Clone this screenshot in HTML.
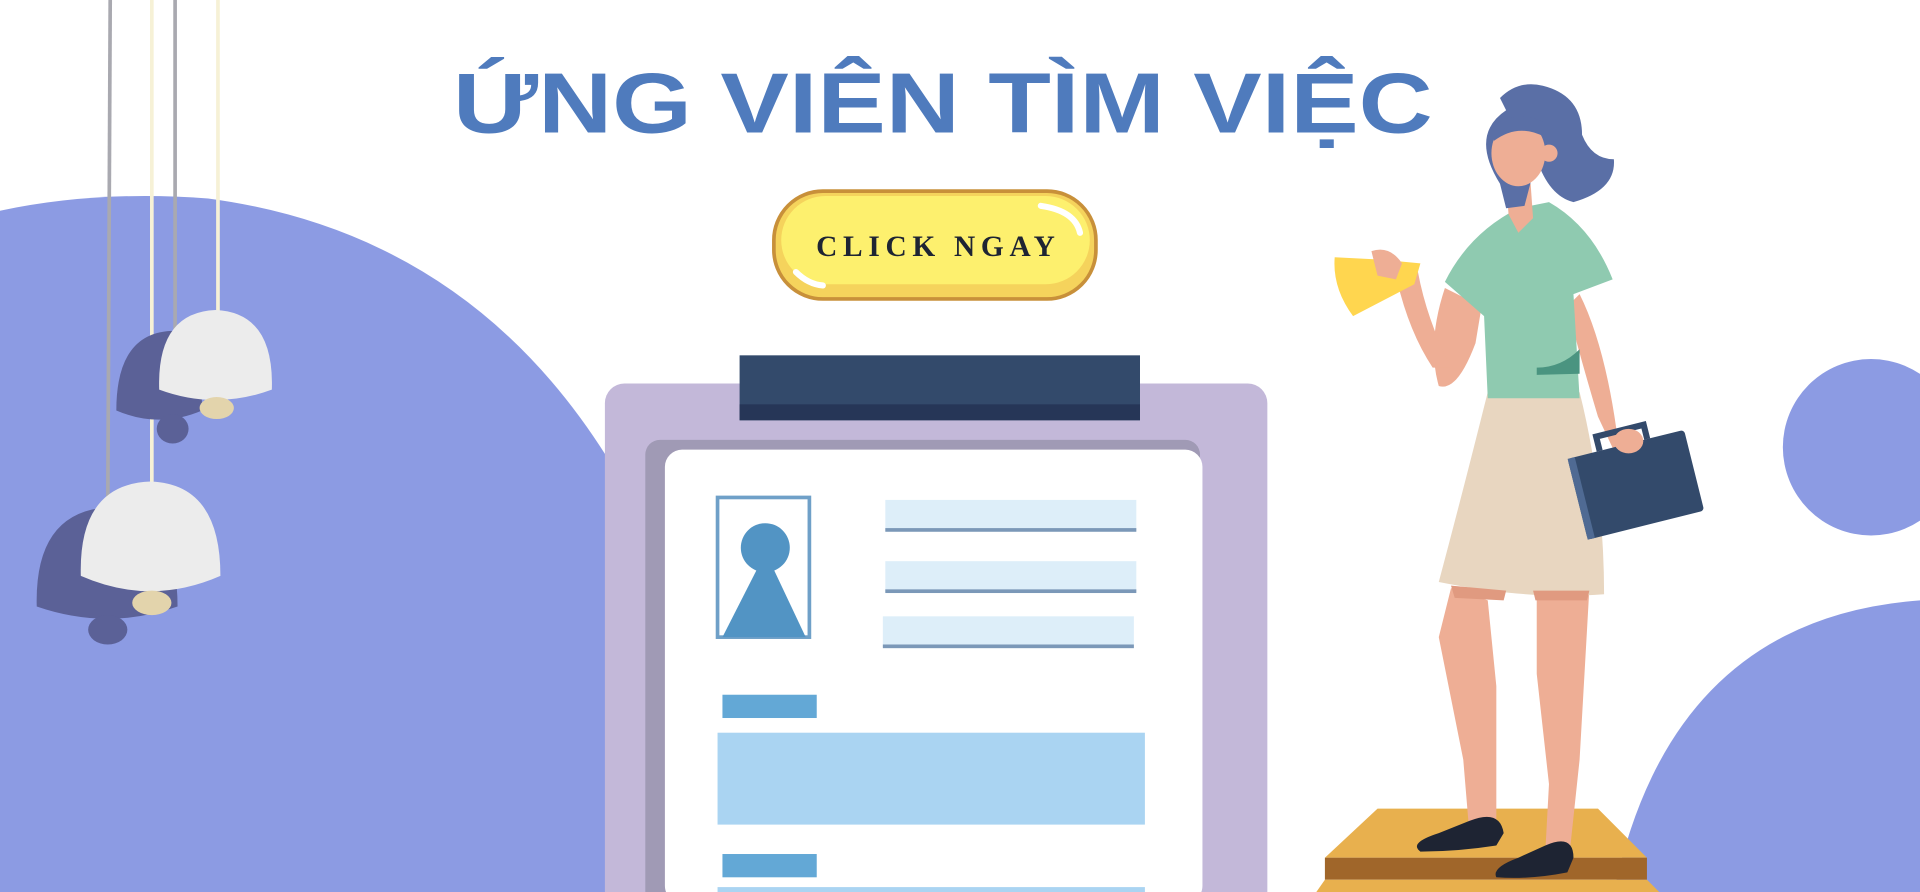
<!DOCTYPE html>
<html><head><meta charset="utf-8"><style>
html,body{margin:0;padding:0;background:#fff;}
svg{display:block;}
</style></head><body>
<svg width="1920" height="892" viewBox="0 0 1568 728" preserveAspectRatio="none" xmlns="http://www.w3.org/2000/svg">
<rect width="1568" height="728" fill="#fff"/>
<path d="M0,172 Q80,155 170,162 Q380,190 495,372 L495,728 L0,728 Z" fill="#8c9be3"/>
<circle cx="1528" cy="365" r="72" fill="#8c9be3"/>
<path d="M1318,728 Q1365,505 1568,490 L1568,728 Z" fill="#8c9be3"/>
<line x1="90" y1="0" x2="88" y2="420" stroke="#a9a9b0" stroke-width="3"/>
<line x1="143" y1="0" x2="143" y2="275" stroke="#a9a9b0" stroke-width="3"/>
<line x1="124" y1="0" x2="124" y2="395" stroke="#f6f1d6" stroke-width="3"/>
<line x1="178" y1="0" x2="178" y2="255" stroke="#f6f1d6" stroke-width="3"/>
<path d="M95,335 Q95,272 140,270 Q165,272 165,335 Q130,350 95,335Z" fill="#5b6197"/>
<ellipse cx="141" cy="350" rx="13" ry="12" fill="#5b6197"/>
<path d="M130,318 Q128,255 176,253 Q224,255 222,318 Q176,335 130,318Z" fill="#ececec"/>
<ellipse cx="177" cy="333" rx="14" ry="9" fill="#e3d4ac"/>
<path d="M30,495 Q28,418 88,414 Q145,418 145,495 Q88,515 30,495Z" fill="#5b6197"/>
<ellipse cx="88" cy="514" rx="16" ry="12" fill="#5b6197"/>
<path d="M66,470 Q64,395 123,393 Q180,395 180,470 Q123,495 66,470Z" fill="#ececec"/>
<ellipse cx="124" cy="492" rx="16" ry="10" fill="#e3d4ac"/>
<text x="770" y="108" text-anchor="middle" font-family="Liberation Sans, DejaVu Sans, sans-serif" font-weight="bold" font-size="70" fill="#4f7bbd" textLength="800" lengthAdjust="spacingAndGlyphs">ỨNG VIÊN TÌM VIỆC</text>
<rect x="632" y="156" width="263" height="88" rx="40" fill="#f5d35c" stroke="#c8903a" stroke-width="3"/>
<rect x="638" y="160" width="252" height="72" rx="36" fill="#fdf06e"/>
<path d="M850,168 Q878,172 882,190" stroke="#fff" stroke-width="5" fill="none" stroke-linecap="round"/>
<path d="M650,222 Q660,232 672,233" stroke="#fff" stroke-width="5" fill="none" stroke-linecap="round"/>
<text x="764" y="209" text-anchor="middle" font-family="Liberation Serif, serif" font-weight="bold" font-size="24" fill="#1e2433" textLength="195" lengthAdjust="spacing">CLICK NGAY</text>
<rect x="494" y="313" width="541" height="430" rx="16" fill="#c3b8d9"/>
<rect x="527" y="359" width="453" height="380" rx="12" fill="#a09ab5"/>
<rect x="543" y="367" width="439" height="370" rx="14" fill="#fff"/>
<rect x="604" y="290" width="327" height="53" fill="#334a6b"/>
<rect x="604" y="330" width="327" height="13" fill="#263657"/>
<rect x="586" y="406" width="75" height="114" fill="#fff" stroke="#6fa0c8" stroke-width="3"/>
<circle cx="625" cy="447" r="20" fill="#5294c4"/>
<path d="M590,520 L618,465 L632,465 L658,520Z" fill="#5294c4"/>
<rect x="723" y="408" width="205" height="25" fill="#ddeef9"/><rect x="723" y="431" width="205" height="3" fill="#7b98b8"/>
<rect x="723" y="458" width="205" height="25" fill="#ddeef9"/><rect x="723" y="481" width="205" height="3" fill="#7b98b8"/>
<rect x="721" y="503" width="205" height="25" fill="#ddeef9"/><rect x="721" y="526" width="205" height="3" fill="#7b98b8"/>
<rect x="590" y="567" width="77" height="19" fill="#63a8d6"/>
<rect x="586" y="598" width="349" height="75" fill="#aad4f2"/>
<rect x="590" y="697" width="77" height="19" fill="#63a8d6"/>
<rect x="586" y="724" width="349" height="6" fill="#aad4f2"/>
<path d="M1125,660 L1305,660 L1345,700 L1082,700Z" fill="#e8b04e"/>
<rect x="1082" y="700" width="263" height="18" fill="#a0662a"/>
<path d="M1075,728 L1082,718 L1345,718 L1355,728Z" fill="#e8b04e"/>
<path d="M1185,480 L1175,520 L1195,620 L1200,680 L1222,680 L1222,560 L1215,490Z" fill="#eeae95"/>
<path d="M1255,480 L1255,550 L1265,640 L1262,695 L1282,695 L1290,620 L1298,480Z" fill="#eeae95"/>
<path d="M1200,670 Q1225,660 1228,680 L1222,690 Q1190,695 1160,695 Q1150,688 1175,680Z" fill="#1e2433"/>
<path d="M1262,690 Q1285,680 1285,700 L1280,712 Q1250,718 1222,716 Q1218,708 1240,700Z" fill="#1e2433"/>
<path d="M1215,320 L1290,320 Q1310,400 1310,485 Q1250,490 1175,475 Q1195,400 1215,320Z" fill="#e8d6c0"/>
<path d="M1185,478 L1230,482 L1228,490 L1188,488Z" fill="#e09a80"/>
<path d="M1252,482 L1298,482 L1296,490 L1254,490Z" fill="#e09a80"/>
<path d="M1290,240 Q1310,280 1320,350 L1335,370 L1320,372 L1305,340 Q1290,290 1280,250Z" fill="#eeae95"/>
<path d="M1180,235 Q1165,280 1175,315 Q1190,320 1205,280 L1210,250Z" fill="#eeae95"/>
<path d="M1140,225 Q1150,270 1170,300 L1185,300 Q1165,260 1158,222Z" fill="#eeae95"/>
<path d="M1240,170 Q1200,190 1180,230 L1212,258 L1215,325 L1290,325 L1285,240 L1317,228 Q1300,185 1265,165Z" fill="#8fcab0"/>
<path d="M1255,300 Q1275,300 1290,285 L1290,305 L1255,306Z" fill="#4a9480"/>
<path d="M1230,150 L1250,150 L1252,178 L1240,190 L1232,175Z" fill="#eeae95"/>
<path d="M1230,90 Q1200,110 1225,150 L1230,170 L1245,168 L1255,130 Q1265,160 1285,165 Q1320,155 1318,130 Q1300,130 1292,110 Q1292,78 1260,70 Q1240,65 1225,80Z" fill="#5a6fa6"/>
<ellipse cx="1240" cy="125" rx="22" ry="27" fill="#eeae95"/>
<path d="M1218,105 Q1235,88 1262,100 L1262,112 Q1240,100 1220,115Z" fill="#5a6fa6"/>
<circle cx="1265" cy="125" r="7" fill="#eeae95"/>
<path d="M1090,210 L1130,212 L1160,215 L1155,232 L1105,258 Q1088,235 1090,210Z" fill="#ffd64f"/>
<path d="M1120,205 Q1135,200 1145,215 L1140,228 L1125,225Z" fill="#eeae95"/>
<g transform="rotate(-14 1335 400)">
<rect x="1288" y="362" width="98" height="68" rx="3" fill="#334a6b"/>
<rect x="1288" y="362" width="6" height="68" fill="#4f6a93"/>
<path d="M1315,362 L1315,350 L1355,350 L1355,362" stroke="#334a6b" stroke-width="5" fill="none"/>
</g>
<ellipse cx="1330" cy="360" rx="12" ry="10" fill="#eeae95"/>
</svg>
</body></html>
